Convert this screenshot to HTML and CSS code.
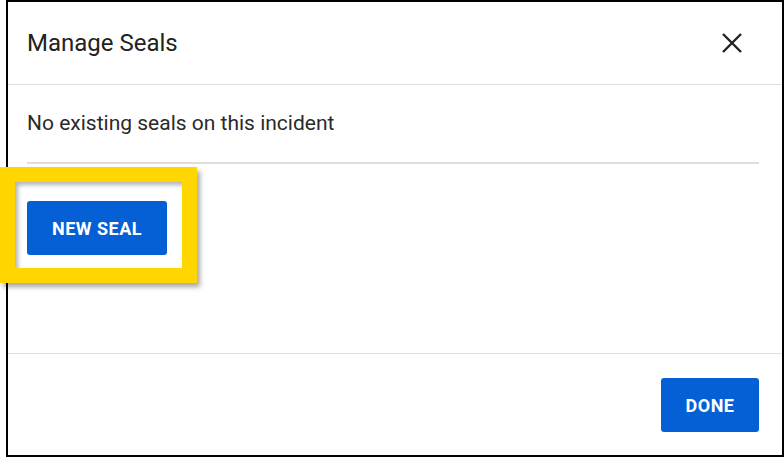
FILE: index.html
```html
<!DOCTYPE html>
<html>
<head>
<meta charset="utf-8">
<link rel="stylesheet" href="styles.css">
</head>
<body>
<div class="page">
  <div class="dialog">
    <div class="dialog-header">
      <h1 class="dialog-title">Manage Seals</h1>
      <button class="close-btn" aria-label="Close">
        <svg width="20" height="20" viewBox="0 0 20 20"><path d="M1 1 L19 19 M19 1 L1 19" stroke="#222" stroke-width="2.4" fill="none"/></svg>
      </button>
    </div>
    <div class="dialog-body">
      <p class="empty-text">No existing seals on this incident</p>
      <div class="actions">
        <button class="btn">NEW SEAL</button>
      </div>
    </div>
    <div class="dialog-footer">
      <button class="btn">DONE</button>
    </div>
  </div>
  <div class="highlight"></div>
</div>
</body>
</html>
```
FILE: styles.css
```css
html, body {
  margin: 0;
  padding: 0;
  background: #fff;
}
body {
  font-family: Roboto, "Liberation Sans", sans-serif;
  color: #222;
}
.page {
  position: relative;
  width: 784px;
  height: 457px;
  overflow: hidden;
}
.dialog {
  margin-left: 6px;
  width: 778px;
  height: 457px;
  box-sizing: border-box;
  border: 2px solid #000;
  display: flex;
  flex-direction: column;
}
.dialog-header {
  height: 82px;
  flex: none;
  display: flex;
  align-items: center;
  justify-content: space-between;
  padding: 0 40px 0 19px;
  border-bottom: 1px solid #e0e0e0;
}
.dialog-title {
  margin: 0;
  font-size: 24px;
  font-weight: 400;
  color: #222;
  line-height: 28px;
}
.close-btn {
  border: 0;
  background: none;
  padding: 0;
  width: 20px;
  height: 20px;
  display: block;
}
.close-btn svg { display: block; }
.dialog-body {
  flex: 1;
  padding: 26px 23px 0 19px;
}
.empty-text {
  margin: 0;
  font-size: 21px;
  line-height: 24px;
  color: #2a2a2a;
  padding-bottom: 27px;
  border-bottom: 2px solid #dedede;
}
.actions {
  padding-top: 37px;
}
.btn {
  border: 0;
  border-radius: 3px;
  background: #0560d6;
  color: #fff;
  font-family: Roboto, "Liberation Sans", sans-serif;
  font-weight: 700;
  font-size: 18px;
  letter-spacing: 0.5px;
  height: 54px;
  padding: 0 24px;
  cursor: pointer;
}
.actions .btn { width: 140px; }
.dialog-footer {
  flex: none;
  height: 102px;
  box-sizing: border-box;
  border-top: 1px solid #e0e0e0;
  padding: 24px 23px 0 0;
  display: flex;
  justify-content: flex-end;
  align-items: flex-start;
}
.dialog-footer .btn { width: 98px; }
.highlight {
  position: absolute;
  left: 0;
  top: 167px;
  width: 197px;
  height: 116px;
  box-sizing: border-box;
  border: 15px solid #ffd600;
  box-shadow: 3px 4px 5px rgba(0,0,0,0.35), inset 3px 3px 4px rgba(0,0,0,0.3);
}
```
